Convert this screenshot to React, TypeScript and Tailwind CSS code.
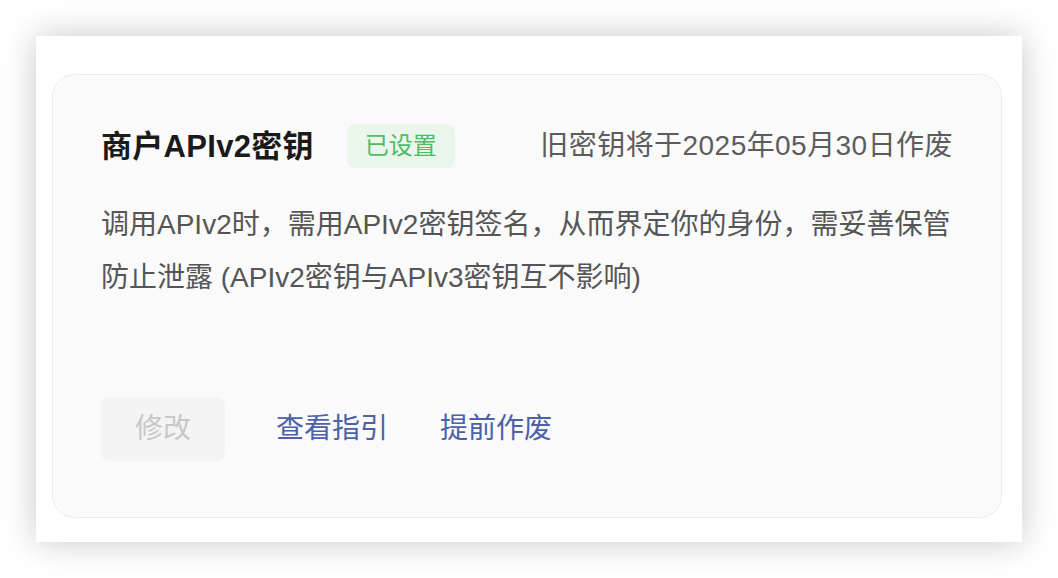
export default function App() {
  const font = {
    fontFamily: '"Liberation Sans", "Noto Sans CJK SC", sans-serif',
  };

  return (
    <div className="min-h-screen w-full bg-white pt-9 pl-9" style={font}>
      {/* outer panel */}
      <div className="w-[986px] h-[506px] bg-white shadow-[0_0_32px_rgba(0,0,0,0.22)] pt-[38px] pl-4 pr-5 pb-6">
        {/* key card */}
        <div className="flex flex-col h-[444px] rounded-[22px] border-[1.5px] border-[#ededed] bg-[#fafafa] px-[48px] pt-[49px]">
          <div className="flex items-center h-[44px]">
            <h2 className="text-[31px] font-bold text-[#1a1a1a] leading-none tracking-[0.3px]">
              商户APIv2密钥
            </h2>
            <span className="ml-[33px] flex items-center h-[44px] px-[18px] rounded-lg bg-[#eaf6ec] text-[24px] text-[#4dbd65]">
              已设置
            </span>
            <span className="ml-auto text-[28px] text-[#5c5c5c] leading-none tracking-[0.45px]">
              旧密钥将于2025年05月30日作废
            </span>
          </div>

          <p className="mt-[30px] text-[28px] leading-[53px] text-[#555]">
            调用APIv2时，需用APIv2密钥签名，从而界定你的身份，需妥善保管防止泄露 (APIv2密钥与APIv3密钥互不影响)
          </p>

          <div className="mt-auto mb-[56px] flex items-center">
            <button className="h-[64px] w-[124px] rounded-lg bg-[#f4f4f4] text-[28px] text-[#c8c8c8]">
              修改
            </button>
            <a href="#" className="ml-[51px] text-[28px] text-[#4b62a8]">
              查看指引
            </a>
            <a href="#" className="ml-[52px] text-[28px] text-[#4b62a8]">
              提前作废
            </a>
          </div>
        </div>
      </div>
    </div>
  );
}
